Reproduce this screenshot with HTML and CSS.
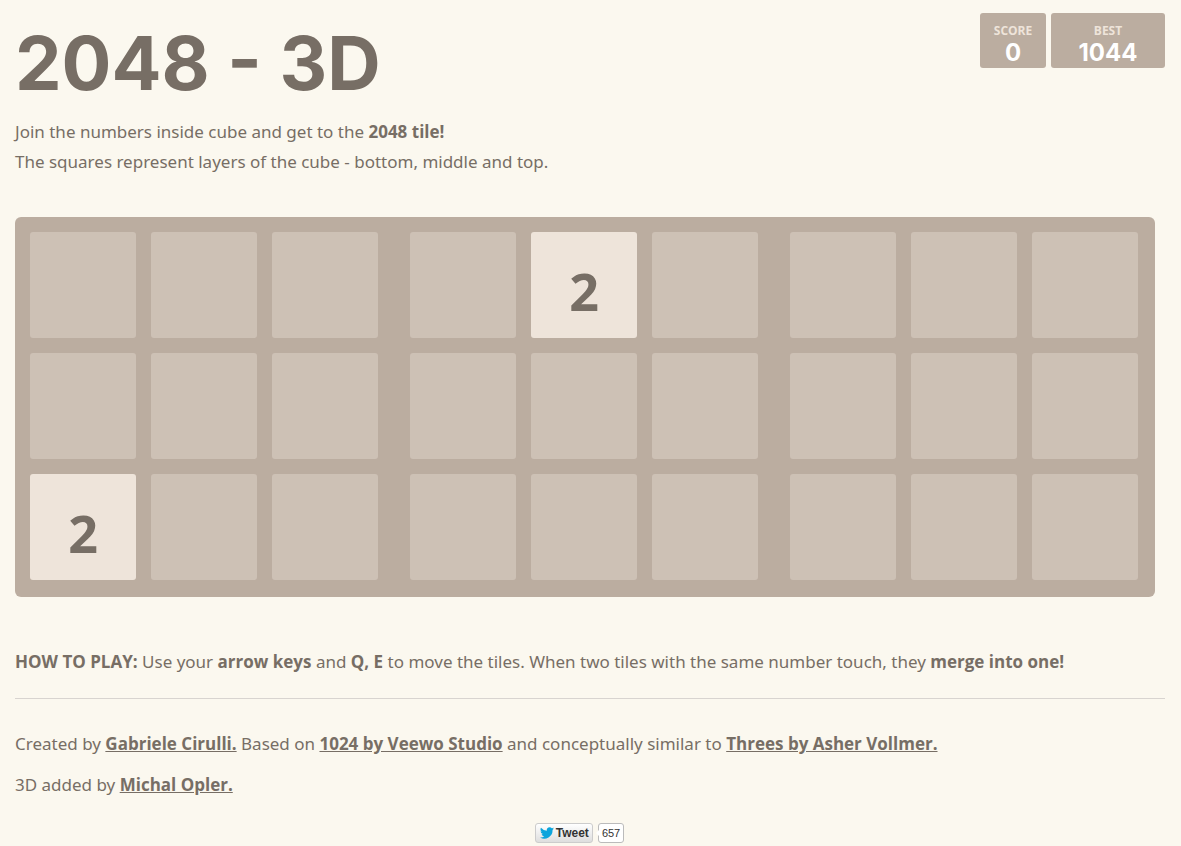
FILE: index.html
```html
<!DOCTYPE html>
<html lang="en">
<head>
<meta charset="utf-8">
<meta name="viewport" content="width=device-width, initial-scale=1">
<title>2048 - 3D</title>
<link rel="stylesheet" href="styles.css">
</head>
<body>
<div class="container">
  <header class="heading">
    <h1 class="title">2048 - 3D</h1>
    <div class="scores">
      <div class="score"><span class="score-label">SCORE</span><span class="score-value">0</span></div>
      <div class="score score-best"><span class="score-label">BEST</span><span class="score-value">1044</span></div>
    </div>
  </header>
  <p class="intro">Join the numbers inside cube and get to the <strong>2048 tile!</strong><br>The squares represent layers of the cube - bottom, middle and top.</p>
  <main class="board">
    <div class="layer">
      <div class="cell"></div><div class="cell"></div><div class="cell"></div>
      <div class="cell"></div><div class="cell"></div><div class="cell"></div>
      <div class="cell tile">2</div><div class="cell"></div><div class="cell"></div>
    </div>
    <div class="layer">
      <div class="cell"></div><div class="cell tile">2</div><div class="cell"></div>
      <div class="cell"></div><div class="cell"></div><div class="cell"></div>
      <div class="cell"></div><div class="cell"></div><div class="cell"></div>
    </div>
    <div class="layer">
      <div class="cell"></div><div class="cell"></div><div class="cell"></div>
      <div class="cell"></div><div class="cell"></div><div class="cell"></div>
      <div class="cell"></div><div class="cell"></div><div class="cell"></div>
    </div>
  </main>
  <p class="how-to"><strong>HOW TO PLAY:</strong> Use your <strong>arrow keys</strong> and <strong>Q, E</strong> to move the tiles. When two tiles with the same number touch, they <strong>merge into one!</strong></p>
  <hr class="rule">
  <footer class="credits">
    <p class="credit">Created by <a href="#">Gabriele Cirulli.</a> Based on <a href="#">1024 by Veewo Studio</a> and conceptually similar to <a href="#">Threes by Asher Vollmer.</a></p>
    <p class="credit">3D added by <a href="#">Michal Opler.</a></p>
    <div class="share">
      <button class="tweet" type="button">
        <svg class="bird" viewBox="0 0 24 20" aria-hidden="true"><path d="M24 2.400a10 10 0 0 1-2.800.800A5 5 0 0 0 23.300.500a10 10 0 0 1-3.100 1.200A4.900 4.900 0 0 0 11.800 6.200 14 14 0 0 1 1.700 1a4.900 4.900 0 0 0 1.500 6.600A5 5 0 0 1 1 7a4.900 4.900 0 0 0 4 4.900 5 5 0 0 1-2.300.1 4.900 4.900 0 0 0 4.600 3.400A9.900 9.900 0 0 1 0 17.500 14 14 0 0 0 21.500 5z"/></svg>
        Tweet
      </button>
      <a class="count" href="#">657</a>
    </div>
  </footer>
</div>
</body>
</html>
```
FILE: styles.css
```css
* { box-sizing: border-box; }
body {
  margin: 0;
  background: #fbf8ef;
  color: #776e65;
  font: 17px/30px "Noto Sans", "Open Sans", sans-serif;
}
strong, .credit a { font-family: "Open Sans", "Noto Sans", sans-serif; font-weight: 700; }
.container { padding: 13px 16px 3px 15px; }
.heading { display: flex; justify-content: space-between; align-items: flex-start; }
.title {
  margin: 0;
  padding-bottom: 4px;
  font: 700 74px/100px Inter, "Open Sans", sans-serif;
  white-space: nowrap;
}
.scores { display: flex; gap: 5px; }
.score {
  display: flex;
  flex-direction: column;
  align-items: center;
  min-width: 66px;
  height: 55px;
  padding: 10px 13px 0;
  border-radius: 3px;
  background: #bbada0;
  color: #fff;
  font-weight: 700;
}
.score-best { padding: 10px 25px 0; min-width: 114px; }
.score-label { font: 700 12px/16px "Open Sans", sans-serif; color: #eee4da; }
.score-value { font: 700 24px/28px Inter, "Open Sans", sans-serif; }
.intro { margin: 0 0 40px; }
.board {
  display: grid;
  grid-template-columns: repeat(3, minmax(0, 1fr));
  max-width: 1140px;
  border-radius: 6px;
  background: #bbada0;
}
.layer {
  display: grid;
  grid-template-columns: repeat(3, minmax(0, 1fr));
  gap: 15px;
  padding: 15px 17px 17px 15px;
}
.cell { aspect-ratio: 1; border-radius: 3px; background: #cdc1b5; }
.tile {
  display: flex;
  align-items: center;
  justify-content: center;
  padding-top: 12px;
  background: #eee4da;
  font: 700 52px/60px "Open Sans", sans-serif;
}
.how-to { margin: 50px 0 21px; }
.rule { height: 1px; margin: 0 0 30px; border: 0; background: #d8d4d0; }
.credit { margin: 0 0 11px; }
.credit a { color: inherit; text-decoration: underline; }
.share { display: flex; justify-content: center; gap: 5px; margin-top: 23px; padding-right: 21px; }
.tweet {
  display: flex;
  align-items: center;
  gap: 2px;
  height: 20px;
  padding: 0 3px 0 4px;
  border: 1px solid #ccc;
  border-radius: 3px;
  background: linear-gradient(#fff, #dedede);
  color: #333;
  font: bold 12px/18px "Liberation Sans", Arial, sans-serif;
}
.bird { width: 14px; height: 12px; fill: #0ca5dc; }
.count {
  position: relative;
  height: 20px;
  padding: 0 3px;
  border: 1px solid #bbb;
  border-radius: 3px;
  background: #fff;
  color: #333;
  font: 11px/18px "Liberation Sans", Arial, sans-serif;
  text-decoration: none;
}
.count::before {
  content: "";
  position: absolute;
  left: -3px;
  top: 6px;
  border: solid transparent;
  border-width: 3px 3px 3px 0;
  border-right-color: #fff;
}
```
